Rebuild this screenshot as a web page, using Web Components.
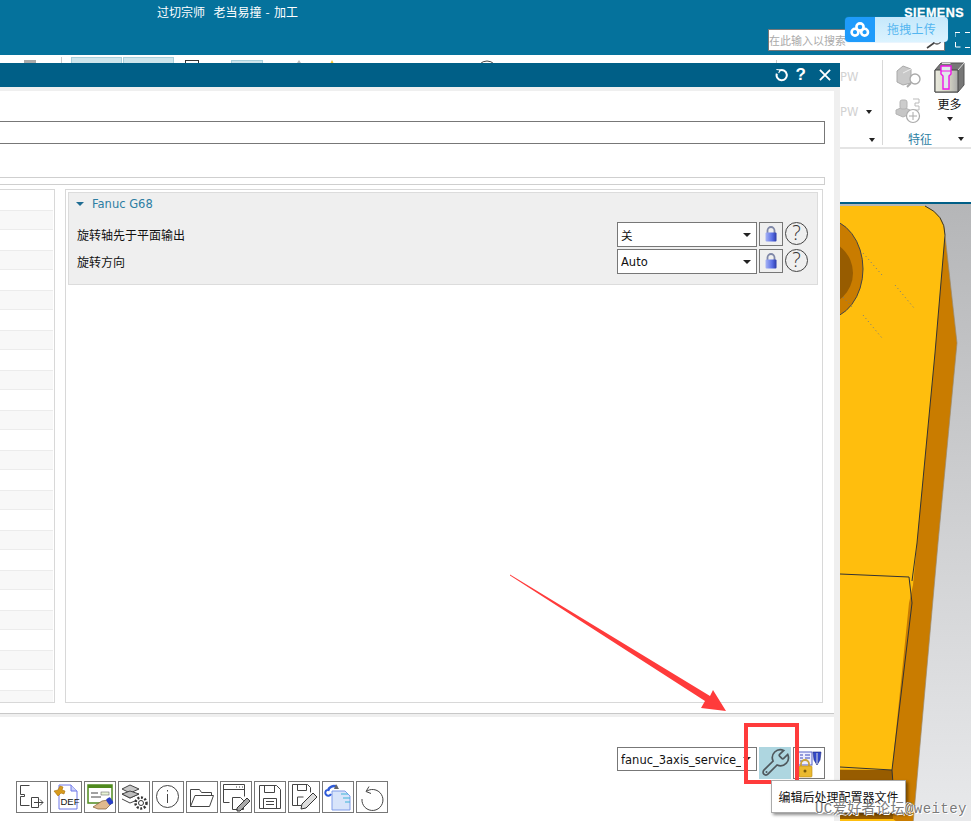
<!DOCTYPE html>
<html>
<head>
<meta charset="utf-8">
<style>
  html, body { margin: 0; padding: 0; height: 100%; overflow: hidden; background: #fff; }
  body { font: 12px "DejaVu Sans", "Noto Sans CJK SC", sans-serif; }
</style>
</head>
<body>
<nx-app></nx-app>
<script>
const FONT = `"DejaVu Sans", "Noto Sans CJK SC", sans-serif`;
const CJK = `"Noto Sans CJK SC", sans-serif`;

// title bar of the main window
class NxTitlebar extends HTMLElement {
  connectedCallback() {
    this.attachShadow({ mode: 'open' }).innerHTML = `
<style>
  :host { display: flex; height: 55px; background: #05729c; color: #fff; font: 12px ${CJK}; position: relative; box-sizing: border-box; }
  .title { margin: 3px 0 0 157px; line-height: 17px; white-space: pre; word-spacing: 1.5px; flex: 1; }
  .right { width: 203px; display: flex; flex-direction: column; align-items: flex-start; }
  .brand { align-self: flex-end; margin: 6px 7px 0 0; font: bold 12.5px "Liberation Sans", sans-serif; letter-spacing: .5px; line-height: 15px; -webkit-text-stroke: .3px #fff; }
  .row { display: flex; margin-top: 8px; }
  .search { width: 175px; height: 20px; background: #fff; border: 1px solid #777; color: #aaa; font-size: 11px; line-height: 20px; display: flex; justify-content: space-between; overflow: hidden; }
  .search svg { margin: 5px 1px 0 0; }
  .full { margin: 3px 0 0 10px; }
</style>
<div class="title">过切宗师  老当易撞 - 加工</div>
<div class="right">
  <div class="brand">SIEMENS</div>
  <div class="row">
    <div class="search"><span>在此输入以搜索</span>
      <svg width="20" height="16" viewBox="0 0 20 16"><circle cx="14" cy="5" r="4" fill="none" stroke="#555" stroke-width="1.3"/><path d="M11 8L4 13" stroke="#444" stroke-width="1.6"/></svg>
    </div>
    <svg class="full" width="15" height="16" viewBox="0 0 15 16" fill="none" stroke="#fff"><path d="M0 5V.5h5M10 .5h5M.5 10v5h5M10 15.5h5"/></svg>
  </div>
</div>`;
  }
}
customElements.define('nx-titlebar', NxTitlebar);

// floating upload widget that lies over the title bar
class UploadWidget extends HTMLElement {
  connectedCallback() {
    this.attachShadow({ mode: 'open' }).innerHTML = `
<style>
  :host { position: absolute; left: 845px; top: 17px; width: 103px; height: 25px; display: flex; border-radius: 4px; overflow: hidden; font: 12px ${CJK}; box-shadow: 0 0 1px #2a9cf5; }
  .logo { width: 30px; background: #1f9bfb; display: flex; align-items: center; justify-content: center; }
  .txt { flex: 1; background: linear-gradient(#c5e8fb, #dcf3ff); color: #55b6f0; text-align: center; line-height: 24px; letter-spacing: .2px; }
</style>
<div class="logo"><svg width="20" height="15" viewBox="0 0 20 15" fill="none" stroke="#fff" stroke-width="2.6"><circle cx="10" cy="5" r="3.6"/><circle cx="5" cy="10.2" r="3.4"/><circle cx="14.6" cy="10.2" r="3.4"/></svg></div>
<div class="txt">拖拽上传</div>`;
  }
}
customElements.define('upload-widget', UploadWidget);

// ribbon behind the dialog
class NxRibbon extends HTMLElement {
  connectedCallback() {
    this.attachShadow({ mode: 'open' }).innerHTML = `
<style>
  :host { display: flex; justify-content: space-between; height: 94px; background: #fff; border-bottom: 2px solid #e4e4e4; box-sizing: border-box; font: 12px ${CJK}; }
  .strip { display: flex; align-items: flex-start; height: 8px; overflow: hidden; padding: 2px 0 0 24px; }
  .strip > * { flex: none; }
  .hi { width: 49px; height: 20px; background: #cde5ec; border: 1px solid #a8d0dc; margin-right: 1px; }
  .cluster { display: flex; width: 131px; height: 92px; }
  .pw { width: 42px; color: #d2d2d2; font: 11.5px ${FONT}; display: flex; flex-direction: column; padding-top: 15px; box-sizing: border-box; }
  .pw .l2 { margin-top: 21px; display: flex; align-items: center; justify-content: space-between; padding-right: 10px; }
  .pw .end { align-self: flex-end; margin: 19px 7px 0 0; }
  .tri { width: 0; height: 0; border: 3px solid transparent; border-top: 4px solid #222; border-bottom: 0; }
  .feat { flex: 1; border-left: 1px solid #d8d8d8; margin-top: 5px; height: 85px; display: grid; grid-template-columns: 50px 1fr; grid-template-rows: 33px 36px 16px; }
  .a { grid-column: 1; padding: 4px 0 0 12px; }
  .more { grid-column: 2; grid-row: 1 / 3; display: flex; flex-direction: column; align-items: center; padding-right: 5px; }
  .more span { margin-top: 2px; line-height: 17px; color: #111; }
  .more .tri { margin-top: 5px; }
  .foot { grid-column: 1 / 3; grid-row: 3; display: flex; align-items: center; justify-content: space-between; padding: 3px 7px 0 25px; color: #2d7ea3; }
</style>
<div class="strip">
  <svg width="12" height="3" style="margin:3px 25px 0 0"><rect width="12" height="3" fill="#aaa"/></svg>
  <div style="width:1px;height:6px;background:#ccc;margin-right:9px"></div>
  <div class="hi"></div><div class="hi"></div>
  <svg width="16" height="6" style="margin:0 30px 0 10px"><rect x=".5" y="3.500" width="13" height="6" fill="none" stroke="#333"/></svg>
  <div class="hi" style="width:30px;margin:3px 32px 0 0"></div>
  <svg width="8" height="6" style="margin-top:3px;margin-right:25px"><path d="M0 6L4 0l4 6z" fill="#bbb"/></svg>
  <svg width="8" height="6" style="margin-top:3px;margin-right:140px"><path d="M1 6L4 0l3 6z" fill="#f2c430"/></svg>
  <svg width="22" height="6" style="margin-top:3px;margin-right:278px"><circle cx="11" cy="11" r="10" fill="none" stroke="#444"/></svg>
  <div style="width:1px;height:6px;background:#ccc;margin-top:3px;margin-right:1px"></div>
</div>
<div class="cluster">
  <div class="pw">
    <div>PW</div>
    <div class="l2"><span>PW</span><i class="tri"></i></div>
    <i class="tri end"></i>
  </div>
  <div class="feat">
    <div class="a"><svg width="26" height="25" viewBox="0 0 26 25"><path d="M2 7l6-5 8 3v14l-8 2-6-3z" fill="#c9c9c9" stroke="#aaa"/><path d="M8 9l8-4" stroke="#eee"/><circle cx="20" cy="15" r="5" fill="#fff" stroke="#aaa" stroke-width="1.4"/><path d="M16 19l-4 4" stroke="#aaa" stroke-width="2"/></svg></div>
    <div class="more">
      <svg width="31" height="31" viewBox="0 0 31 31" style="margin-top:2px"><defs><linearGradient id="g" x1="0" x2="1"><stop offset="0" stop-color="#e9e9dd"/><stop offset=".6" stop-color="#d4d4c4"/><stop offset="1" stop-color="#aaa"/></linearGradient></defs><path d="M1 8l6-7h23v22l-6 7H1z" fill="#777" stroke="#555"/><path d="M1 8h23v22H1z" fill="url(#g)" stroke="#444"/><path d="M8 1.500h8.500M24 8l6-7" stroke="#ddd"/><path d="M7 4h10v8l-2 2v13h-6V14l-2-2z" fill="#dfe9e9" stroke="#f016e8" stroke-width="1.4"/><path d="M7 9h10" stroke="#f016e8"/></svg>
      <span>更多</span>
      <i class="tri"></i>
    </div>
    <div class="a" style="grid-row:2;padding-top:5px"><svg width="26" height="26" viewBox="0 0 26 26"><path d="M1 12l7-3 7 3v4l-7 3-7-3z" fill="#c6c6c6" stroke="#b4b4b4"/><rect x="5" y="2" width="7" height="9" rx="2" fill="#ccc" stroke="#b4b4b4"/><path d="M18 1h6v4h-4v3h4v4h-6" fill="none" stroke="#bbb"/><circle cx="18" cy="18" r="6.500" fill="#fff" stroke="#aaa" stroke-width="1.2"/><path d="M18 14v8M14 18h8" stroke="#aaa"/></svg></div>
    <div class="foot"><span>特征</span><i class="tri"></i></div>
  </div>
</div>`;
  }
}
customElements.define('nx-ribbon', NxRibbon);

// graphics window with the part, fills what is left of the page
class NxViewport extends HTMLElement {
  connectedCallback() {
    this.attachShadow({ mode: 'open' }).innerHTML = `
<style>
  :host { display: block; flex: 1; margin-top: 53px; border-top: 2px solid #005f87; overflow: hidden; background: linear-gradient(#b5b6b8, #e8e9eb); }
  svg { display: block; }
</style>
<svg width="971" height="620" viewBox="0 201 971 620">
  <path d="M0 203H925Q945 212 945 232L957 340 938 540 913 821H0z" fill="#c97c00"/>
  <path d="M0 203H925Q945 212 945 232L935 350 917 540 913 582 909 600 892 767 893 816 897 821H0z" fill="#ffbe0d"/>
  <path d="M0 762L892 767 893 816 840 816 0 816z" fill="#975c00"/>
  <path d="M840 816H893L900 821H840z" fill="#ffbe0d"/>
  <ellipse cx="825" cy="266" rx="38" ry="50" fill="#c97c00" stroke="#444"/>
  <ellipse cx="818" cy="270" rx="35" ry="34" fill="#975c00"/>
  <g fill="none" stroke="#333" stroke-width="1">
    <path d="M925 203Q945 212 945 232L935 350 917 540 912 578"/>
    <path d="M840 571L909 574 912 600 892 767"/>
    <path d="M840 764L892 767 893 781"/>
  </g>
  <path d="M945 232L957 340 938 540 913 821" fill="none" stroke="#9a8a70" stroke-width=".7"/>
  <g fill="none" stroke="#6a7a8a" stroke-dasharray="1 3">
    <path d="M863 250L882 272M895 282L914 305M863 312L882 335M843 294L852 304"/>
  </g>
</svg>`;
  }
}
customElements.define('nx-viewport', NxViewport);

// fake dropdown
class DropSelect extends HTMLElement {
  connectedCallback() {
    this.attachShadow({ mode: 'open' }).innerHTML = `
<style>
  :host { display: flex; align-items: center; width: 140px; height: var(--h, 25px); box-sizing: border-box; border: 1px solid #777; background: #fff; font: 11.5px ${FONT}; color: #111; padding: 0 5px 0 3px; }
  .t { flex: 1; overflow: hidden; white-space: nowrap; padding-top: var(--t, 0); }
  .tri { width: 0; height: 0; border: 4px solid transparent; border-top: 4px solid #222; border-bottom: 0; flex: none; margin-left: 2px; }
</style>
<div class="t"><slot></slot></div><i class="tri"></i>`;
  }
}
customElements.define('drop-select', DropSelect);

// one line of the Fanuc G68 group
class OptionRow extends HTMLElement {
  connectedCallback() {
    this.attachShadow({ mode: 'open' }).innerHTML = `
<style>
  :host { display: flex; align-items: flex-start; height: 27px; padding-left: 8px; font: 12px ${CJK}; color: #111; }
  .lab { flex: 1; line-height: 26px; }
  .lock { width: 24px; height: 24px; box-sizing: border-box; border: 1px solid #777; margin-left: 2px; display: flex; align-items: center; justify-content: center; }
  .help { width: 23px; height: 23px; box-sizing: border-box; border: 1px solid #444; border-radius: 50%; margin: 0 9px 0 2px; text-align: center; font: 300 20px/20px "Open Sans", sans-serif; color: #333; }
</style>
<span class="lab">${this.getAttribute('label')}</span>
<drop-select><slot></slot></drop-select>
<div class="lock"><svg width="12" height="16" viewBox="0 0 12 16"><defs><linearGradient id="l" x1="0" x2="1"><stop offset="0" stop-color="#a8b4f4"/><stop offset=".6" stop-color="#5a6fe6"/><stop offset="1" stop-color="#2b3aa8"/></linearGradient></defs><path d="M2.500 7V4.500a3.500 3.500 0 0 1 7 0V7" fill="none" stroke="#8088a8" stroke-width="1.800"/><rect x=".5" y="6.500" width="11" height="9" rx="1" fill="url(#l)"/></svg></div>
<div class="help">?</div>`;
  }
}
customElements.define('option-row', OptionRow);

// square button with an icon
class ToolBtn extends HTMLElement {
  connectedCallback() {
    this.attachShadow({ mode: 'open' }).innerHTML = `
<style>
  :host { display: block; width: 32px; height: 32px; box-sizing: border-box; border: 1px solid #777; background: #fff; flex: none; }
  :host([active]) { border: 0; background: #aed6e0; }
  ::slotted(svg) { display: block; }
</style>
<slot></slot>`;
  }
}
customElements.define('tool-btn', ToolBtn);

// left table of the dialog, cut by the page edge
class ParamList extends HTMLElement {
  connectedCallback() {
    let rows = '';
    for (let i = 0; i < 26; i++) rows += `<div class="r ${i % 2 ? 'odd' : ''}"></div>`;
    this.attachShadow({ mode: 'open' }).innerHTML = `
<style>
  :host { display: block; width: 55px; box-sizing: border-box; border: 1px solid #d8d8d8; border-left: 0; overflow: hidden; flex: none; }
  .r { height: 20px; box-sizing: border-box; padding-right: 1px; }
  .odd { background: #f8f8f8; border-top: 1px solid #ececec; border-bottom: 1px solid #ececec; margin-right: 1px; }
</style>
${rows}`;
  }
}
customElements.define('param-list', ParamList);

// collapsible group with teal header
class ParamGroup extends HTMLElement {
  connectedCallback() {
    this.attachShadow({ mode: 'open' }).innerHTML = `
<style>
  :host { display: block; background: #efefef; border: 1px solid #dcdcdc; height: 93px; box-sizing: border-box; margin: 2px 4px 0 2px; }
  .head { display: flex; align-items: center; height: 22px; padding-left: 7px; color: #2d7ea3; font: 11.5px ${FONT}; margin-bottom: 7px; }
  .tri { width: 0; height: 0; border: 4px solid transparent; border-top: 4px solid #1f6d93; border-bottom: 0; margin-right: 8px; }
</style>
<div class="head"><i class="tri"></i>${this.getAttribute('title')}</div>
<slot></slot>`;
  }
}
customElements.define('param-group', ParamGroup);

// the post builder dialog
class PostDialog extends HTMLElement {
  connectedCallback() {
    this.attachShadow({ mode: 'open' }).innerHTML = `
<style>
  :host { position: absolute; left: 0; top: 63px; width: 840px; height: 758px; display: flex; flex-direction: column; background: #efefef; font: 12px ${FONT}; }
  .bar { height: 24px; background: #005f87; color: #fff; display: flex; justify-content: flex-end; align-items: center; padding-right: 9px; flex: none; }
  .bar b { font: bold 17px/24px "Liberation Sans", sans-serif; margin: 0 13px 0 8px; }
  .body { flex: 1; margin: 4px 6px 0 0; background: #fff; display: flex; flex-direction: column; min-height: 0; }
  .name { height: 23px; margin: 30px 9px 0 0; box-sizing: border-box; border: 1px solid #777; border-left: 0; flex: none; }
  .tabs { height: 8px; margin: 33px 9px 0 0; box-sizing: border-box; border: 1px solid #cfcfcf; border-left: 0; flex: none; }
  .panels { display: flex; gap: 10px; height: 514px; margin: 4px 11px 0 0; flex: none; }
  .main { flex: 1; border: 1px solid #d8d8d8; box-sizing: border-box; }
  .sep { height: 3px; margin-top: 10px; background: #efefef; border-top: 1px solid #c8c8c8; flex: none; }
  .foot { flex: 1; display: flex; flex-direction: column; padding-top: 30px; box-sizing: border-box; }
  .r1 { display: flex; justify-content: flex-end; gap: 2px; padding-right: 9px; align-items: flex-start; }
  .r1 drop-select { --h: 24px; --t: 1px; }
  .r2 { display: flex; gap: 2px; padding-left: 16px; margin-top: 2px; }
</style>
<div class="bar">
  <svg width="13" height="14" viewBox="0 0 14 14" fill="none" stroke="#fff" stroke-width="2.200"><path d="M5 2.200A5.500 5.500 0 1 1 2 5.500"/><path d="M1.500 1l4 .5-1.500 3.500" stroke-width="1.200"/></svg>
  <b>?</b>
  <svg width="12" height="12" viewBox="0 0 13 13" stroke="#fff" stroke-width="2"><path d="M1 1l11 11M12 1L1 12"/></svg>
</div>
<div class="body">
  <div class="name"></div>
  <div class="tabs"></div>
  <div class="panels">
    <param-list></param-list>
    <div class="main">
      <param-group title="Fanuc G68">
        <option-row label="旋转轴先于平面输出">关</option-row>
        <option-row label="旋转方向">Auto</option-row>
      </param-group>
    </div>
  </div>
  <div class="sep"></div>
  <div class="foot">
    <div class="r1"><drop-select>fanuc_3axis_service_</drop-select><slot name="actions"></slot></div>
    <div class="r2"><slot name="tools"></slot></div>
  </div>
</div>`;
  }
}
customElements.define('post-dialog', PostDialog);

// red arrow, red box, tooltip and forum watermark over the screenshot
class ShotOverlay extends HTMLElement {
  connectedCallback() {
    this.attachShadow({ mode: 'open' }).innerHTML = `
<style>
  :host { position: absolute; inset: 0; pointer-events: none; display: block; }
  svg { position: absolute; left: 0; top: 0; }
  .tip { position: absolute; left: 771px; top: 780px; width: 135px; height: 33px; box-sizing: border-box; background: #fff; border: 1px solid #aaa; box-shadow: 2px 2px 3px rgba(0,0,0,.45); font: 12px/32px ${CJK}; color: #111; text-align: center; white-space: nowrap; }
  .wm { position: absolute; left: 815px; top: 801px; font: 14px/17px "Liberation Mono", "Noto Sans CJK SC", monospace; letter-spacing: .45px; color: #7a7a7a; text-shadow: 1px 1px 0 #fff, -1px 0 0 #fff; white-space: nowrap; }
</style>
<svg width="971" height="821" viewBox="0 0 971 821">
  <path d="M510 574.500L710 696 713 690 726 711 701 708 705 701 510 575.500z" fill="#ff3b3b"/>
  <rect x="746" y="725" width="51" height="57" fill="none" stroke="#ff3b3b" stroke-width="4"/>
</svg>
<div class="tip">编辑后处理配置器文件</div>
<div class="wm">UC爱好者论坛@weitey</div>`;
  }
}
customElements.define('shot-overlay', ShotOverlay);

const S = 'fill="none" stroke="#444" stroke-width="1"';
const TOOLS = [
  `<path ${S} d="M13.500 4.500h-9v9h4v2h-4v9h9M15.500 16.500h7v10h-7zM18 21.500h9M24 18.500l3 3-3 3"/>`,
  `<path d="M9 4h12l6 6v18H9z" fill="#fff" stroke="#6f78e8"/><path d="M21 4v6h6" fill="#cdd2fa" stroke="#6f78e8"/><path d="M4 10l4-1 2-4 3 1-1 3 3 1-1 3-3-1-3 3z" fill="#d79a1c" stroke="#a86e08" stroke-width=".6"/><text x="10.500" y="24" font-family="Liberation Sans" font-size="9.500" fill="#111">DEF</text>`,
  `<rect x="4" y="4" width="24" height="18" fill="#fff" stroke="#4f8a1e" stroke-width="1.500"/><rect x="4" y="4" width="24" height="3" fill="#4f8a1e"/><path d="M7 12h7M17 12h8M7 16h10" stroke="#444"/><rect x="17" y="11" width="8" height="3" fill="#e8f3d6" stroke="#555" stroke-width=".5"/><path d="M9 26l9-6 6-1 3 4-5 5H14z" fill="#e0b98e" stroke="#805a32" stroke-width=".7"/><rect x="23" y="17" width="5" height="7" rx="1.500" transform="rotate(-35 25 20)" fill="#2b3fc8"/>`,
  `<path d="M4 8l8-4 9 4-9 4z" fill="#c8c8c8" stroke="#444"/><path d="M4 13l8 4 9-4M4 18l8 4 5-2" ${S}/><path d="M4 13l8-3 9 3-9 4z" fill="#bdbdbd" stroke="#444"/><circle cx="23" cy="22" r="5.500" fill="#fff" stroke="#333" stroke-width="2.500" stroke-dasharray="2 1.600"/><circle cx="23" cy="22" r="2.500" fill="#fff" stroke="#333"/>`,
  `<circle cx="15.500" cy="15.500" r="11" ${S}/><path ${S} d="M15.500 13v9"/><path d="M15.500 9v1.500" stroke="#444"/>`,
  `<path ${S} d="M4.500 25.500V8.500h9l2 3h10v3"/><path ${S} d="M4.500 25.500h19l4-11h-18.500z"/>`,
  `<path ${S} d="M3.500 21.500V3.500h21v12M3.500 8.500h21M16 6h1M19 6h1M22 6h1M3.500 21.500h6"/><path ${S} d="M12.500 16.500h8l3 3v9h-11z"/><path d="M17 27l10-10 3 3-10 10h-3z" fill="#aaa" stroke="#333"/>`,
  `<path ${S} d="M5.500 4.500h17l4 4v19h-21z"/><path ${S} d="M10.500 4.500v7h10v-7M9.500 27.500v-10h13v10M12 20.500h8M12 23.500h8"/>`,
  `<path ${S} d="M4.500 3.500h15l3 3v5M4.500 3.500v21h9M9.500 3.500v6h9v-6M9.500 24v-8h6"/><path d="M13 28l1-5L25 12l4 4-11 11z" fill="#ddd" stroke="#333"/>`,
  `<path d="M10 10h13l5 5v14H10z" fill="#d8e4fa" stroke="#7f9be8"/><path d="M19 13h7M21 17h7M23 21h5" stroke="#3fb4d8"/><path d="M6 10a6 6 0 0 1 9-4" fill="none" stroke="#2f5bd8" stroke-width="2.500"/><path d="M5 9a3 3 0 1 0 4 4" fill="none" stroke="#2f5bd8" stroke-width="2"/><path d="M14 3l3 5-5 0z" fill="#666"/>`,
  `<path ${S} d="M13 5.500l-3 5 5 2M11 10a10.500 10.500 0 1 1-5 8"/>`,
];

// page: main window in flow, dialog and annotations on top
class NxApp extends HTMLElement {
  connectedCallback() {
    const tools = TOOLS.map(t => `<tool-btn slot="tools"><svg width="30" height="30" viewBox="1 1 30 30">${t}</svg></tool-btn>`).join('');
    this.attachShadow({ mode: 'open' }).innerHTML = `
<style>
  :host { display: flex; flex-direction: column; width: 971px; height: 821px; position: relative; overflow: hidden; }
</style>
<nx-titlebar></nx-titlebar>
<nx-ribbon></nx-ribbon>
<nx-viewport></nx-viewport>
<upload-widget></upload-widget>
<post-dialog>
  <tool-btn slot="actions" active><svg width="32" height="32" viewBox="0 0 32 32"><path d="M20.600 7.300a1.300 1.300 0 0 0 0 1.900l2.200 2.200a1.300 1.300 0 0 0 1.900 0l4-4a8 8 0 0 1-10.600 10.600l-9.200 9.200a2.800 2.800 0 0 1-4-4l9.200-9.200a8 8 0 0 1 10.600-10.600z" fill="none" stroke="#4f585d" stroke-width="1.700"/><circle cx="7.500" cy="25" r="1" fill="#4f585d"/></svg></tool-btn>
  <tool-btn slot="actions"><svg width="30" height="30" viewBox="0 0 30 30"><rect x="4" y="4" width="14" height="13" fill="#eef" stroke="#5560c8"/><path d="M6 7h3M11 7h5M6 10h3M11 10h5M6 13h3" stroke="#3a46b8"/><path d="M19 4h8l-1 8-3 5-3-5z" fill="#3348c8" stroke="#1c2a80" stroke-width=".6"/><path d="M23 5v11" stroke="#ddd"/><path d="M7 19v-3a4 4 0 0 1 8 0v3" fill="none" stroke="#c9a23a" stroke-width="1.800"/><rect x="5" y="18" width="13" height="11" rx="1" fill="#eab92e" stroke="#b98812" stroke-width=".6"/><circle cx="11" cy="23" r="1.500" fill="#7a5a08"/></svg></tool-btn>
  ${tools}
</post-dialog>
<shot-overlay></shot-overlay>`;
  }
}
customElements.define('nx-app', NxApp);
</script>
</body>
</html>
